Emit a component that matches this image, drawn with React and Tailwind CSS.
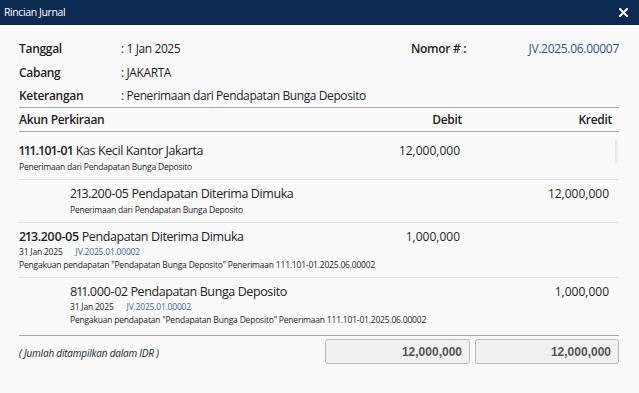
import React from 'react';

const rows = [
  {
    code: '111.101-01',
    name: 'Kas Kecil Kantor Jakarta',
    bold: true,
    indent: false,
    debit: '12,000,000',
    kredit: '',
    note: 'Penerimaan dari Pendapatan Bunga Deposito',
    h: 'h-[43px]',
  },
  {
    code: '213.200-05',
    name: 'Pendapatan Diterima Dimuka',
    bold: false,
    indent: true,
    debit: '',
    kredit: '12,000,000',
    note: 'Penerimaan dari Pendapatan Bunga Deposito',
    h: 'h-[43px]',
  },
  {
    code: '213.200-05',
    name: 'Pendapatan Diterima Dimuka',
    bold: true,
    indent: false,
    debit: '1,000,000',
    kredit: '',
    date: '31 Jan 2025',
    ref: 'JV.2025.01.00002',
    note: 'Pengakuan pendapatan "Pendapatan Bunga Deposito" Penerimaan 111.101-01.2025.06.00002',
    h: 'h-[55px]',
  },
  {
    code: '811.000-02',
    name: 'Pendapatan Bunga Deposito',
    bold: false,
    indent: true,
    debit: '',
    kredit: '1,000,000',
    date: '31 Jan 2025',
    ref: 'JV.2025.01.00002',
    note: 'Pengakuan pendapatan "Pendapatan Bunga Deposito" Penerimaan 111.101-01.2025.06.00002',
    h: 'h-[57px]',
  },
];

function InfoRow({ label, value }) {
  return (
    <div className="flex h-[24px] items-center">
      <div className="w-[102px] font-semibold tracking-[-0.3px]">{label}</div>
      <div className="tracking-[-0.4px]">: {value}</div>
    </div>
  );
}

export default function App() {
  return (
    <div className="w-[639px] h-[393px] bg-[#fafafa] text-[#222] font-['Open_Sans',sans-serif] text-[12px] overflow-hidden">
      {/* title bar */}
      <div className="h-[25px] bg-[#0d2a53] flex items-center justify-between pl-[4px] pr-[11px]">
        <span className="text-white text-[10.5px] tracking-[-0.4px]">Rincian Jurnal</span>
        <svg width="9" height="9" viewBox="0 0 9 9">
          <path d="M1 1 L8 8 M8 1 L1 8" stroke="white" strokeWidth="2" strokeLinecap="round" />
        </svg>
      </div>

      <div className="pl-[19px] pr-[20px] pt-[12px]">
        <div className="flex">
          <div className="flex-1">
            <InfoRow label="Tanggal" value="1 Jan 2025" />
            <InfoRow label="Cabang" value="JAKARTA" />
          </div>
          <div className="flex h-[24px] items-center">
            <span className="font-semibold w-[116px] tracking-[-0.3px]">Nomor # :</span>
            <span className="text-[#2f5591] w-[92px] text-right tracking-[-0.3px]">JV.2025.06.00007</span>
          </div>
        </div>
        <div className="border-b border-[#a8a8a8] h-[24px] -mt-[1px]">
          <InfoRow label="Keterangan" value="Penerimaan dari Pendapatan Bunga Deposito" />
        </div>

        {/* table header */}
        <div className="flex h-[24px] items-center border-b border-[#a8a8a8] font-semibold pr-[7px] tracking-[-0.3px]">
          <div className="flex-1">Akun Perkiraan</div>
          <div className="w-[150px] text-right">Debit</div>
          <div className="w-[150px] text-right">Kredit</div>
        </div>

        {/* rows */}
        <div className="relative h-[204px] pt-[5px] border-b border-[#a8a8a8] overflow-hidden">
          <div className="absolute right-[1px] top-[8px] w-[3px] h-[23px] bg-[#ececec]" />
          {rows.map((r, i) => (
            <div
              key={i}
              className={`flex ${r.h} pt-[6px] pr-[10px] ${i < rows.length - 1 ? 'border-b border-[#e4e4e4]' : ''}`}
            >
              <div className={`flex-1 min-w-0 ${r.indent ? 'pl-[51px]' : ''}`}>
                <div className="h-[16px] leading-[16px] text-[12.5px] tracking-[-0.4px] proportional-nums whitespace-nowrap">
                  <span className={r.bold ? 'font-semibold' : ''}>{r.code}</span> {r.name}
                </div>
                {r.date ? (
                  <div className="text-[8.5px] leading-[13px] tracking-[-0.2px] whitespace-nowrap">
                    <div>
                      {r.date}
                      <span className="ml-[13px] text-[#3d63a3]">{r.ref}</span>
                    </div>
                    <div>{r.note}</div>
                  </div>
                ) : (
                  <div className="mt-[2px] text-[8.5px] leading-[12px] tracking-[-0.2px]">{r.note}</div>
                )}
              </div>
              <div className="w-[149px] shrink-0 text-right h-[16px] leading-[16px]">{r.debit}</div>
              <div className="w-[149px] shrink-0 text-right h-[16px] leading-[16px]">{r.kredit}</div>
            </div>
          ))}
        </div>

        {/* footer */}
        <div className="flex items-start pt-[4px]">
          <div className="flex-1 pt-[6px] italic text-[10px] tracking-[-0.2px]">( Jumlah ditampilkan dalam IDR )</div>
          <div className="flex gap-[5px] -mt-[1px]">
            <div className="w-[145px] h-[25px] rounded-[3px] border border-[#b8b8b8] bg-[#f1f1f1] flex items-center justify-end pr-[7px] font-['Liberation_Sans',sans-serif] font-bold text-[12px] text-[#555]">
              12,000,000
            </div>
            <div className="w-[144px] h-[25px] rounded-[3px] border border-[#b8b8b8] bg-[#f1f1f1] flex items-center justify-end pr-[7px] font-['Liberation_Sans',sans-serif] font-bold text-[12px] text-[#555]">
              12,000,000
            </div>
          </div>
        </div>
      </div>
    </div>
  );
}
